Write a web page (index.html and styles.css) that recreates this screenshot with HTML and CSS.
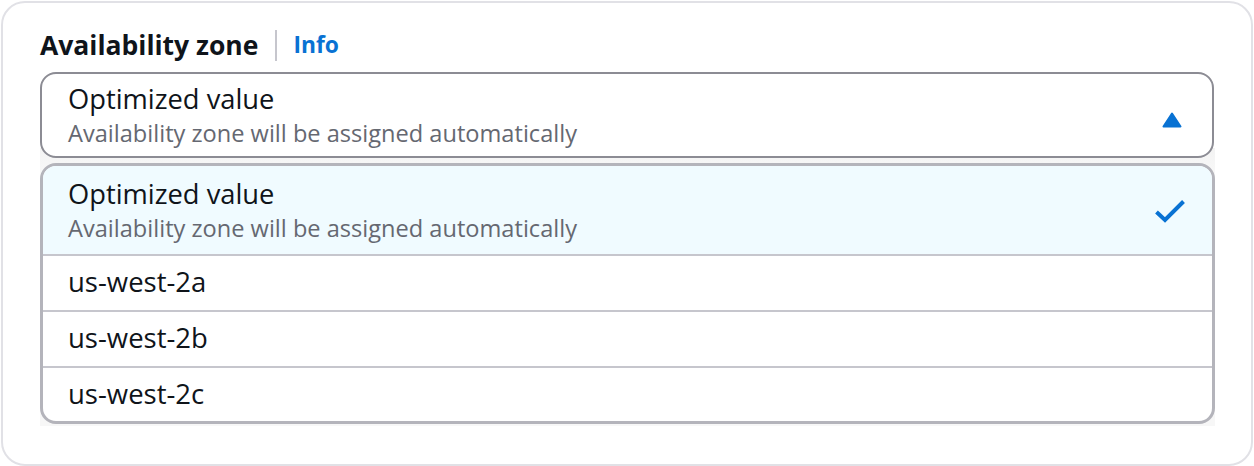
FILE: index.html
```html
<!DOCTYPE html>
<html>
<head>
<meta charset="utf-8">
<link rel="stylesheet" href="styles.css">
</head>
<body>
<div class="card">
  <div class="label-row">
    <span class="label">Availability zone</span>
    <span class="sep"></span>
    <a class="info">Info</a>
  </div>
  <div class="trigger">
    <div class="trigger-text">
      <div class="opt-label">Optimized value</div>
      <div class="opt-desc">Availability zone will be assigned automatically</div>
    </div>
    <svg class="caret" width="20" height="16" viewBox="0 0 20 16"><path d="M10 1.5 L18.5 14.5 L1.5 14.5 Z" fill="#0972d3" stroke="#0972d3" stroke-width="2" stroke-linejoin="round"/></svg>
  </div>
  <div class="drop-wrap">
    <div class="dropdown">
      <div class="option selected">
        <div class="trigger-text">
          <div class="opt-label">Optimized value</div>
          <div class="opt-desc">Availability zone will be assigned automatically</div>
        </div>
        <svg class="check" width="32" height="26" viewBox="0 0 32 26"><path d="M2.5 14 L11 22 L29.5 3.5" fill="none" stroke="#0972d3" stroke-width="4" stroke-linecap="butt" stroke-linejoin="miter"/></svg>
      </div>
      <div class="option">us-west-2a</div>
      <div class="option">us-west-2b</div>
      <div class="option last">us-west-2c</div>
    </div>
  </div>
</div>
</body>
</html>
```

FILE: styles.css
```css
html, body {
  margin: 0;
  padding: 0;
  background: #ffffff;
}
body {
  font-family: "Open Sans", "Noto Sans", sans-serif;
  color: #0f141a;
}
.card {
  margin: 1px;
  width: 1252px;
  height: 465px;
  box-sizing: border-box;
  border: 2px solid #e1e1e6;
  border-radius: 24px;
  padding: 24px 38px 0 37px;
}
.label-row {
  display: flex;
  align-items: center;
  height: 36px;
}
.label {
  font-weight: 700;
  font-size: 26.5px;
  line-height: 36px;
  color: #0f141a;
}
.sep {
  width: 2px;
  height: 31px;
  background: #c6c6cd;
  margin: 0 16px 0 17px;
}
.info {
  font-weight: 700;
  font-size: 22.8px;
  line-height: 36px;
  color: #0972d3;
}
.trigger {
  margin-top: 9px;
  width: 1174px;
  height: 86px;
  box-sizing: border-box;
  border: 2px solid #8c8c94;
  border-radius: 16px;
  padding: 7px 30px 0 26px;
  display: flex;
  align-items: center;
  justify-content: space-between;
  position: relative;
  z-index: 1;
  background: #fff;
}
.trigger > .trigger-text {
  align-self: flex-start;
}
.opt-label {
  font-size: 27.3px;
  line-height: 36px;
  color: #0f141a;
}
.opt-desc {
  font-size: 23.6px;
  line-height: 32px;
  color: #656871;
}
.caret {
  display: block;
  margin-top: 2px;
}
.drop-wrap {
  width: 1175px;
  margin-top: -10px;
  padding-top: 15px;
  padding-bottom: 2px;
  background: linear-gradient(#f3f3f3, #f7f7f7 20px, #f7f7f7);
}
.dropdown {
  box-sizing: border-box;
  border: 3px solid #b4b4bb;
  border-radius: 16px;
  background: #fff;
  overflow: hidden;
}
.option {
  font-size: 27.5px;
  line-height: 36px;
  padding: 8px 26px 10px 25px;
  border-bottom: 2px solid #c6c6cd;
  color: #0f141a;
}
.option.last {
  border-bottom: none;
  padding-bottom: 9px;
}
.option.selected {
  background: #f0fbff;
  display: flex;
  align-items: center;
  justify-content: space-between;
  padding: 10px 26px 10px 25px;
  border-bottom-left-radius: 0;
}
.check {
  display: block;
  margin-top: 2px;
}
```
